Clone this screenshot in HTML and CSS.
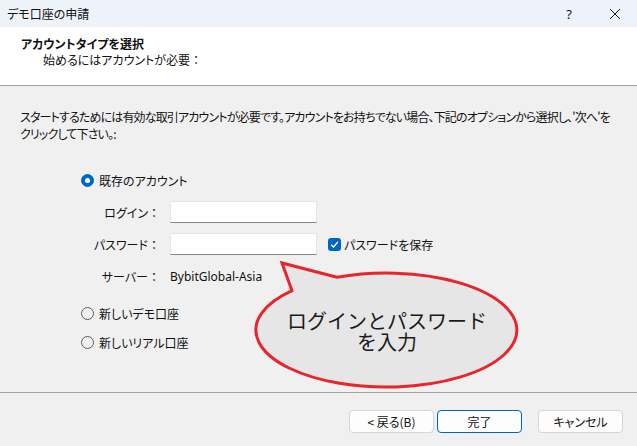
FILE: index.html
```html
<!DOCTYPE html>
<html lang="ja">
<head>
<meta charset="utf-8">
<title>デモ口座の申請</title>
<link rel="stylesheet" href="styles.css">
</head>
<body>
<div class="window">
  <div class="titlebar">
    <div class="title">デモ口座の申請</div>
    <div class="tb-btn help">?</div>
    <div class="tb-btn close">
      <svg width="12" height="12" viewBox="0 0 12 12"><path d="M1 1 L11 11 M11 1 L1 11" stroke="#1a1a1a" stroke-width="1" fill="none"/></svg>
    </div>
  </div>
  <div class="header">
    <div class="header-title">アカウントタイプを選択</div>
    <div class="header-sub">始めるにはアカウントが必要<span class="fw">：</span></div>
  </div>
  <div class="content">
    <p class="intro">スタートするためには有効な取引アカウントが必要です。アカウントをお持ちでない場合、下記のオプションから選択し、'次へ'を<br>クリックして下さい。:</p>
    <div class="radio-row first"><span class="radio checked"></span><span>既存のアカウント</span></div>
    <div class="form">
      <div class="label">ログイン<span class="fw">：</span></div>
      <div class="input"></div>
      <div></div>
      <div class="label">パスワード<span class="fw">：</span></div>
      <div class="input"></div>
      <div class="check-row">
        <span class="checkbox"><svg width="9" height="9" viewBox="0 0 9 9"><path d="M1.2 4.8 L3.5 7 L7.8 2" stroke="#fff" stroke-width="1.3" fill="none"/></svg></span>
        <span>パスワードを保存</span>
      </div>
      <div class="label">サーバー<span class="fw">：</span></div>
      <div class="server">BybitGlobal-Asia</div>
      <div></div>
    </div>
    <div class="radio-row second"><span class="radio"></span><span>新しいデモ口座</span></div>
    <div class="radio-row third"><span class="radio"></span><span>新しいリアル口座</span></div>
  </div>
  <div class="footer">
    <div class="btn back">&lt; 戻る(B)</div>
    <div class="btn primary">完了</div>
    <div class="btn cancel">キャンセル</div>
  </div>
  <div class="callout">
    <svg width="280" height="140" viewBox="250 255 280 140">
      <path d="M337 277.3 L282 263 L292 290.7 A130.5 57 0 1 0 337 277.3 Z" fill="#e6e6e6" stroke="#e8242c" stroke-width="3" stroke-linejoin="miter"/>
    </svg>
    <div class="callout-text">
      <div>ログインとパスワード</div>
      <div>を入力</div>
    </div>
  </div>
</div>
</body>
</html>
```

FILE: styles.css
```css
* { box-sizing: border-box; }
html, body {
  margin: 0;
  padding: 0;
}
body {
  width: 637px;
  height: 446px;
  overflow: hidden;
  background: #f0f0f0;
  font-family: "Noto Sans CJK JP", "Noto Sans", sans-serif;
  font-size: 12px;
  color: #111;
  font-feature-settings: "palt";
}
.fw {
  font-feature-settings: normal;
}
.window {
  position: relative;
  width: 637px;
  height: 446px;
  display: flex;
  flex-direction: column;
}
.titlebar {
  height: 27px;
  background: #eef2f9;
  display: flex;
  align-items: center;
  padding-left: 7px;
  flex: none;
}
.title {
  flex: 1;
  line-height: 16px;
}
.tb-btn {
  height: 27px;
  display: flex;
  align-items: center;
  justify-content: center;
}
.help {
  width: 46px;
  font-family: "Noto Sans", sans-serif;
  font-size: 13px;
}
.close {
  width: 45px;
}
.header {
  height: 59px;
  background: #fff;
  border-bottom: 1px solid #a0a0a0;
  padding: 9px 0 0 21px;
  flex: none;
}
.header-title {
  font-weight: bold;
  line-height: 16px;
}
.header-sub {
  line-height: 16px;
  padding-left: 22px;
}
.content {
  flex: 1;
  padding: 22px 0 0 20px;
}
.intro {
  margin: 0;
  line-height: 17px;
  white-space: nowrap;
  letter-spacing: -0.85px;
}
.radio-row {
  display: flex;
  align-items: center;
  height: 20px;
  margin-left: 61px;
  gap: 5px;
}
.radio-row.first { margin-top: 28px; }
.radio-row.second { margin-top: 16px; }
.radio-row.third { margin-top: 9px; }
.radio {
  width: 13px;
  height: 13px;
  border-radius: 50%;
  border: 1px solid #5c5c5c;
  flex: none;
  display: flex;
  align-items: center;
  justify-content: center;
}
.radio.checked {
  background: #0067c0;
  border-color: #0067c0;
}
.radio.checked::after {
  content: "";
  width: 5px;
  height: 5px;
  border-radius: 50%;
  background: #fff;
}
.form {
  display: grid;
  grid-template-columns: 140px 147px auto;
  grid-auto-rows: 22px;
  column-gap: 10px;
  row-gap: 10px;
  margin-top: 11px;
  align-items: center;
}
.label {
  text-align: right;
}
.input {
  height: 22px;
  background: #fff;
  border: 1px solid #e6e6e6;
  border-bottom: 1px solid #868686;
  border-radius: 2px 2px 0 0;
}
.server {
  font-family: "Noto Sans", sans-serif;
}
.check-row {
  display: flex;
  align-items: center;
  gap: 3px;
  margin-left: 1px;
}
.checkbox {
  width: 13px;
  height: 13px;
  border-radius: 3px;
  background: #0067c0;
  display: flex;
  align-items: center;
  justify-content: center;
}
.footer {
  height: 54px;
  flex: none;
  border-top: 1px solid #a0a0a0;
  display: flex;
  justify-content: flex-end;
  padding: 17px 14px 0 0;
}
.btn {
  height: 23px;
  width: 85px;
  background: #fdfdfd;
  border: 1px solid #d5d5d5;
  border-radius: 4px;
  display: flex;
  align-items: center;
  justify-content: center;
  line-height: 16px;
}
.btn.back { margin-right: 3px; }
.btn.primary {
  border-color: #0067c0;
  margin-right: 16px;
}
.callout {
  position: absolute;
  left: 250px;
  top: 255px;
  width: 280px;
  height: 140px;
}
.callout svg {
  display: block;
}
.callout-text {
  position: absolute;
  left: 37px;
  width: 200px;
  top: 55px;
  text-align: center;
  font-size: 20px;
  line-height: 21px;
  color: #1a1a1a;
  font-feature-settings: normal;
}
```
